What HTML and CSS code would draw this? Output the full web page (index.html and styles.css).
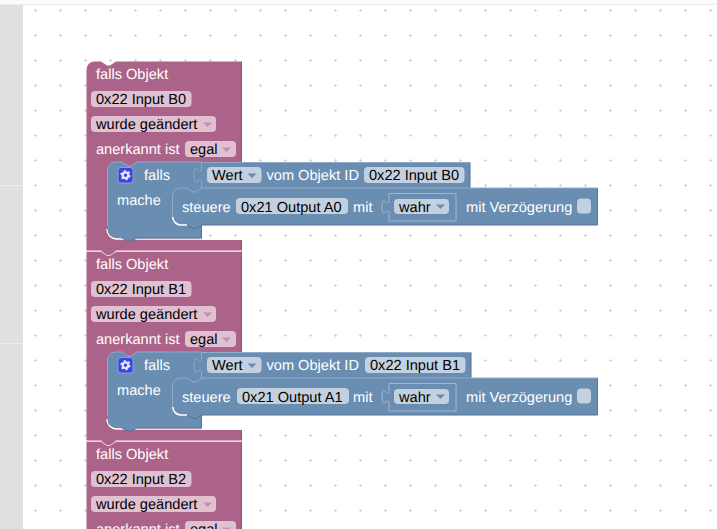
FILE: index.html
```html
<!DOCTYPE html>
<html lang="de">
<head>
<meta charset="utf-8">
<title>Blockly</title>
<link rel="stylesheet" href="styles.css">
</head>
<body>
<div class="topbar"></div>
<div class="main">
  <aside class="sidebar">
    <div class="side-row side-a"></div>
    <div class="side-row side-b"></div>
    <div class="side-row side-c"></div>
  </aside>
  <div class="canvas">
    <svg class="workspace" viewBox="23 5 694 524" width="694" height="524" xmlns="http://www.w3.org/2000/svg">
      <defs>
        <pattern id="dots" x="23" y="-2" width="25" height="25" patternUnits="userSpaceOnUse">
          <path class="dot" d="M11 12.500h3M12.500 11v3"/>
        </pattern>
        <g id="gear">
          <rect class="icon-box" x="118" y="167.500" width="15" height="15.500" rx="3"/>
          <circle class="gear-ring" cx="125.500" cy="175.200" r="2.800"/>
          <circle class="gear-teeth" cx="125.500" cy="175.200" r="4.400"/>
        </g>
      </defs>
      <rect class="grid" x="23" y="5" width="694" height="524" fill="url(#dots)"/>

      <!-- block 3 -->
      <g transform="translate(0 380)">
        <path class="pink" d="M86.500 61.500H241.500V160H86.500Z"/>
        <path class="pink-edge" d="M241.500 61.500V160"/>
        <text class="label" x="96" y="79">falls Objekt</text>
        <rect class="pink-field" x="91" y="91" width="100.500" height="16" rx="4"/>
        <text class="value" x="96" y="104">0x22 Input B2</text>
        <rect class="pink-field" x="91" y="116" width="125" height="16" rx="4"/>
        <text class="value" x="96" y="129">wurde geändert</text>
        <path class="pink-arrow" d="M203 122.500h9l-4.500 4.500Z"/>
        <text class="label" x="96" y="154">anerkannt ist</text>
        <rect class="pink-field" x="185" y="141" width="51" height="16" rx="4"/>
        <text class="value" x="190" y="154">egal</text>
        <path class="pink-arrow" d="M222 147.500h9l-4.500 4.500Z"/>
      </g>

      <!-- block 2 -->
      <g transform="translate(0 190)">
        <path class="pink" d="M86.500 61.500H241.500V162H202V240H241.500V250.500H116l-6 4h-3l-6-4H86.500Z"/>
        <path class="pink-edge" d="M241.500 61.500V162M241.500 240V250.500"/>
        <text class="label" x="96" y="79">falls Objekt</text>
        <rect class="pink-field" x="91" y="91" width="100.500" height="16" rx="4"/>
        <text class="value" x="96" y="104">0x22 Input B1</text>
        <rect class="pink-field" x="91" y="116" width="125" height="16" rx="4"/>
        <text class="value" x="96" y="129">wurde geändert</text>
        <path class="pink-arrow" d="M203 122.500h9l-4.500 4.500Z"/>
        <text class="label" x="96" y="154">anerkannt ist</text>
        <rect class="pink-field" x="185" y="141" width="51" height="16" rx="4"/>
        <text class="value" x="190" y="154">egal</text>
        <path class="pink-arrow" d="M222 147.500h9l-4.500 4.500Z"/>

        <path class="glow" d="M107 229a10 10 0 0 0 9.500 10H202"/>
        <path class="blue" d="M107.500 229.500v-59.500a8 8 0 0 1 8-8H122l6 4h3l6-4H201.500V238H137l-6 3h-3l-6-3H116a8.500 8.500 0 0 1-8.500-8.500Z"/>
        <path class="edge-light" d="M107.500 226v-56a8 8 0 0 1 8-8H122l6 4h3l6-4H201.500"/>
        <path class="edge-dark" d="M201.500 225V238H137l-6 3h-3l-6-3"/>
        <use href="#gear"/>
        <text class="label" x="144" y="180">falls</text>
        <text class="label" x="117" y="205">mache</text>
        <path class="blue" d="M202 162.500H471V188H202V183c0-10-8 8-8-7.500s8 2.500 8-7.500Z"/>
        <path class="edge-light" d="M201.500 188V183c0-10-7.500 8-7.500-7.500s7.500 2.500 7.500-7.500V162.500H471"/>
        <path class="edge-dark" d="M471 162.500V188"/>
        <rect class="blue-field" x="207" y="167" width="54.500" height="16" rx="4"/>
        <text class="value" x="212" y="180">Wert</text>
        <path class="blue-arrow" d="M247.500 173.500h9l-4.500 4.500Z"/>
        <text class="label" x="266.500" y="180">vom Objekt ID</text>
        <rect class="blue-field" x="365" y="167" width="100.500" height="16" rx="4"/>
        <text class="value" x="370" y="180">0x22 Input B1</text>
        <path class="blue" d="M172.500 196a8 8 0 0 1 8-8H187l6 4h3l6-4H597.500V225H202l-6 3.500h-3l-6-3.500H180.500a8 8 0 0 1-8-8Z"/>
        <path class="edge-light" d="M172.500 217V196a8 8 0 0 1 8-8H187l6 4h3l6-4H597.500"/>
        <path class="edge-dark" d="M597.500 188V225H202l-6 3.500h-3l-6-3.500"/>
        <path class="glow" d="M172.800 217a8 8 0 0 0 8 8H187"/>
        <text class="label" x="182" y="212">steuere</text>
        <rect class="blue-field" x="237" y="198" width="112" height="16" rx="4"/>
        <text class="value" x="242" y="212">0x21 Output A1</text>
        <text class="label" x="353" y="212">mit</text>
        <path class="socket" d="M389 215v-1c0-10-7 7-7-7s7 2.500 7-7v-6.500h67v27.500h-67Z"/>
        <rect class="blue-field" x="394" y="199" width="55" height="15" rx="4"/>
        <text class="value" x="399" y="212">wahr</text>
        <path class="blue-arrow" d="M436 204.500h9l-4.500 4.500Z"/>
        <text class="label" x="466" y="212">mit Verzögerung</text>
        <rect class="blue-field" x="577" y="198.500" width="14" height="15" rx="4"/>
      </g>

      <!-- block 1 -->
      <path class="pink" d="M86.500 69.500a8 8 0 0 1 8-8H101l6 4h3l6-4H241.500V162H202V240H241.500V250.500H116l-6 4h-3l-6-4H86.500Z"/>
      <path class="pink-edge" d="M241.500 61.500V162M241.500 240V250.500"/>
      <text class="label" x="96" y="79">falls Objekt</text>
      <rect class="pink-field" x="91" y="91" width="100.500" height="16" rx="4"/>
      <text class="value" x="96" y="104">0x22 Input B0</text>
      <rect class="pink-field" x="91" y="116" width="125" height="16" rx="4"/>
      <text class="value" x="96" y="129">wurde geändert</text>
      <path class="pink-arrow" d="M203 122.500h9l-4.500 4.500Z"/>
      <text class="label" x="96" y="154">anerkannt ist</text>
      <rect class="pink-field" x="185" y="141" width="51" height="16" rx="4"/>
      <text class="value" x="190" y="154">egal</text>
      <path class="pink-arrow" d="M222 147.500h9l-4.500 4.500Z"/>

      <path class="glow" d="M107 229a10 10 0 0 0 9.500 10H202"/>
      <path class="blue" d="M107.500 229.500v-59.500a8 8 0 0 1 8-8H122l6 4h3l6-4H201.500V238H137l-6 3h-3l-6-3H116a8.500 8.500 0 0 1-8.500-8.500Z"/>
      <path class="edge-light" d="M107.500 226v-56a8 8 0 0 1 8-8H122l6 4h3l6-4H201.500"/>
      <path class="edge-dark" d="M201.500 225V238H137l-6 3h-3l-6-3"/>
      <use href="#gear"/>
      <text class="label" x="144" y="180">falls</text>
      <text class="label" x="117" y="205">mache</text>
      <path class="blue" d="M202 162.500H470V188H202V183c0-10-8 8-8-7.500s8 2.500 8-7.500Z"/>
      <path class="edge-light" d="M201.500 188V183c0-10-7.500 8-7.500-7.500s7.500 2.500 7.500-7.500V162.500H470"/>
      <path class="edge-dark" d="M470 162.500V188"/>
      <rect class="blue-field" x="207" y="167" width="54.500" height="16" rx="4"/>
      <text class="value" x="212" y="180">Wert</text>
      <path class="blue-arrow" d="M247.500 173.500h9l-4.500 4.500Z"/>
      <text class="label" x="266.500" y="180">vom Objekt ID</text>
      <rect class="blue-field" x="364" y="167" width="100.500" height="16" rx="4"/>
      <text class="value" x="369" y="180">0x22 Input B0</text>
      <path class="blue" d="M172.500 196a8 8 0 0 1 8-8H187l6 4h3l6-4H597.500V225H202l-6 3.500h-3l-6-3.500H180.500a8 8 0 0 1-8-8Z"/>
      <path class="edge-light" d="M172.500 217V196a8 8 0 0 1 8-8H187l6 4h3l6-4H597.500"/>
      <path class="edge-dark" d="M597.500 188V225H202l-6 3.500h-3l-6-3.500"/>
      <path class="glow" d="M172.800 217a8 8 0 0 0 8 8H187"/>
      <text class="label" x="182" y="212">steuere</text>
      <rect class="blue-field" x="236" y="198" width="112" height="16" rx="4"/>
      <text class="value" x="241" y="212">0x21 Output A0</text>
      <text class="label" x="353" y="212">mit</text>
      <path class="socket" d="M389 215v-1c0-10-7 7-7-7s7 2.500 7-7v-6.500h67v27.500h-67Z"/>
      <rect class="blue-field" x="394" y="199" width="55" height="15" rx="4"/>
      <text class="value" x="399" y="212">wahr</text>
      <path class="blue-arrow" d="M436 204.500h9l-4.500 4.500Z"/>
      <text class="label" x="466" y="212">mit Verzögerung</text>
      <rect class="blue-field" x="577" y="198.500" width="14" height="15" rx="4"/>

      <!-- seams between the stacked blocks -->
      <path class="pink-sep" d="M86 251.500H101l6 4h3l6-4H241.500"/>
      <path class="pink-sep" d="M86 441.500H101l6 4h3l6-4H241.500"/>
    </svg>
  </div>
</div>
</body>
</html>
```

FILE: styles.css
```css
html, body {
  margin: 0;
  height: 100%;
  overflow: hidden;
  background: #fff;
}
body {
  display: flex;
  flex-direction: column;
}
.topbar {
  height: 4px;
  flex: none;
  background: #fbfbfb;
  border-bottom: 1px solid #ececec;
}
.main {
  flex: 1;
  display: flex;
  min-height: 0;
}
.sidebar {
  width: 23px;
  flex: none;
  display: flex;
  flex-direction: column;
  background: #e0e0e0;
}
.side-row { border-bottom: 1px solid #ececec; }
.side-a { height: 180px; }
.side-b { height: 157px; }
.side-c { flex: 1; border-bottom: 0; }
.canvas {
  flex: 1;
  min-width: 0;
  background: #fff;
}
.workspace { display: block; }
.grid { stroke: none; }
.dot { stroke: #d4d4d4; stroke-width: 1; fill: none; }
.pink { fill: #ac6389; }
.pink-edge { fill: none; stroke: #96527a; stroke-width: 1; }
.pink-sep { fill: none; stroke: #e6d3dd; stroke-width: 1; }
.blue { fill: #6a8db2; }
.glow { fill: none; stroke: #fff; stroke-width: 1.6; }
.edge-light { fill: none; stroke: #8fabc9; stroke-width: 1; }
.edge-dark { fill: none; stroke: #527397; stroke-width: 1; }
.socket { fill: none; stroke: #a0b7d0; stroke-width: 1; }
.label, .value {
  font-family: "Liberation Sans", Arial, sans-serif;
  font-size: 14.6px;
  text-rendering: geometricPrecision;
}
.label { fill: #fff; }
.value { fill: #000; }
.pink-field { fill: #e0c1d2; }
.blue-field { fill: #c3d0df; }
.pink-arrow { fill: #c48fac; }
.blue-arrow { fill: #6a8db2; }
.icon-box { fill: #3a44e4; stroke: #8d9ee0; stroke-width: 1; }
.gear-ring { fill: none; stroke: #e4e9f6; stroke-width: 2.200; }
.gear-teeth { fill: none; stroke: #e4e9f6; stroke-width: 1.600; stroke-dasharray: 2 2.610; }
```
